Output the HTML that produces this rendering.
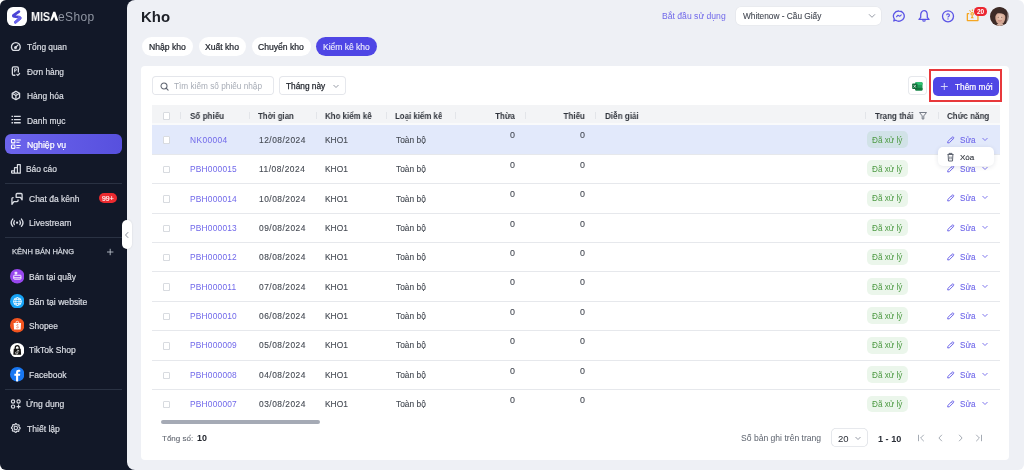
<!DOCTYPE html>
<html><head><meta charset="utf-8"><title>Kho</title>
<style>
*{box-sizing:border-box;margin:0;padding:0}
html,body{width:1024px;height:470px;overflow:hidden;background:#ffffff;font-family:"Liberation Sans",sans-serif}
.b{position:absolute}
.t{position:absolute;white-space:nowrap;will-change:transform;}
</style></head><body>
<div class="b" style="left:0px;top:0px;width:140px;height:470px;background:#121828;border-radius:6px 0 0 6px"></div>
<div class="b" style="left:7.3px;top:7px;width:19.4px;height:19.4px;background:#fff;border-radius:6px"></div>
<svg class="b" style="left:7px;top:7px" width="19" height="19" viewBox="0 0 19 19"><path d="M11.9 4.6 L6.8 8.1 Q5.6 9.1 7.2 9.5 L12.2 10.2 Q13.9 10.7 12.6 11.8 L8.4 15.2" stroke="#4b44d6" stroke-width="2.7" fill="none" stroke-linejoin="round" stroke-linecap="round"/><path d="M12.2 10.2 Q13.9 10.7 12.6 11.8 L8.4 15.2" stroke="#6a63ee" stroke-width="2.7" fill="none" stroke-linejoin="round" stroke-linecap="round"/></svg>
<div class="t" style="left:30.87px;top:11px;font-size:12.2px;line-height:12.2px;color:#ffffff;font-weight:bold;transform:scaleX(0.88);transform-origin:0 0;">MIS</div>
<svg class="b" style="left:0;top:0" width="60" height="24" viewBox="0 0 60 24"><path d="M50.1 20.7 L53.2 11.8 H55.3 L58.3 20.7 H55.6 L54.2 16.4 L52.0 20.7 Z" fill="#fff"/></svg>
<div class="t" style="left:58.08px;top:11px;font-size:12.0px;line-height:12.0px;color:#8f95a2;letter-spacing:0.35px;">eShop</div>
<svg class="b" style="left:8px;top:39.9px" width="16" height="14" viewBox="0 0 16 14"><path d="M5.18 10.45 A4.4 4.4 0 1 1 10.52 10.45 Z" stroke="#dadde4" stroke-width="1.3" fill="none" stroke-linejoin="round"/><circle cx="7.5" cy="7.6" r="1.5" fill="#dadde4"/><path d="M7.6 7.4 L9.9 5.1" stroke="#dadde4" stroke-width="1.3" stroke-linecap="round"/></svg>
<div class="t" style="left:26.70px;top:43px;font-size:8.35px;line-height:8.35px;color:#dadde4;-webkit-text-stroke:0.2px currentColor;">Tổng quan</div>
<svg class="b" style="left:8px;top:64.5px" width="16" height="14" viewBox="0 0 16 14"><path d="M10.35 7.4 V3.2 A1.25 1.25 0 0 0 9.1 1.95 H5.6 A1.25 1.25 0 0 0 4.35 3.2 V9 A1.25 1.25 0 0 0 5.6 10.25 H7.4" stroke="#dadde4" stroke-width="1.3" fill="none"/><path d="M8.9 9.5 L9.8 10.3 L11.6 8.5" stroke="#dadde4" stroke-width="1.2" fill="none" stroke-linecap="round" stroke-linejoin="round"/><path d="M6.7 7.4 V3.7 H7.5 A0.95 0.95 0 0 1 7.5 5.6 H6.7" stroke="#dadde4" stroke-width="1" fill="none"/></svg>
<div class="t" style="left:26.70px;top:68px;font-size:8.33px;line-height:8.33px;color:#dadde4;-webkit-text-stroke:0.2px currentColor;">Đơn hàng</div>
<svg class="b" style="left:8px;top:88.8px" width="16" height="14" viewBox="0 0 16 14"><path d="M7.9 2.2 L11.58 4.33 V8.58 L7.9 10.7 L4.22 8.58 V4.33 Z" stroke="#dadde4" stroke-width="1.3" fill="none" stroke-linejoin="round"/><path d="M4.5 4.6 L7.9 6.6 L11.3 4.6 M7.9 6.6 V10.4" stroke="#dadde4" stroke-width="1.2" fill="none"/><path d="M6.2 3.6 L9.6 5.5" stroke="#dadde4" stroke-width="0.8" fill="none"/></svg>
<div class="t" style="left:26.69px;top:92px;font-size:8.45px;line-height:8.45px;color:#dadde4;-webkit-text-stroke:0.2px currentColor;">Hàng hóa</div>
<svg class="b" style="left:8px;top:113.3px" width="16" height="14" viewBox="0 0 16 14"><path d="M3.5 3.4 H5.1 M6.0 3.4 H12.7 M3.5 6.6 H5.1 M6.0 6.6 H12.7 M3.5 9.8 H5.1 M6.0 9.8 H12.7" stroke="#dadde4" stroke-width="1.4" fill="none"/></svg>
<div class="t" style="left:26.69px;top:117px;font-size:8.46px;line-height:8.46px;color:#dadde4;-webkit-text-stroke:0.2px currentColor;">Danh mục</div>
<div class="b" style="left:4.8px;top:134.4px;width:117.3px;height:19.7px;background:linear-gradient(90deg,#6c64ec,#5750de);border-radius:6px"></div>
<svg class="b" style="left:8px;top:137.3px" width="16" height="14" viewBox="0 0 16 14"><rect x="3.5" y="2.5" width="3.4" height="3.4" rx="0.7" stroke="#fff" stroke-width="1.1" fill="none"/><rect x="3.5" y="8" width="3.4" height="3.4" rx="0.7" stroke="#fff" stroke-width="1.1" fill="none"/><path d="M8.3 3 H12.8 M8.3 5.3 H11.6 M8.3 8.5 H12.8 M8.3 10.8 H11.6" stroke="#fff" stroke-width="1.1" fill="none"/></svg>
<div class="t" style="left:26.78px;top:141px;font-size:8.7px;line-height:8.7px;color:#ffffff;-webkit-text-stroke:0.2px currentColor;">Nghiệp vụ</div>
<svg class="b" style="left:8px;top:162px" width="16" height="14" viewBox="0 0 16 14"><path d="M3.6 11.2 H12.3 V2.6 H9.4 V11.2 M9.4 5.7 H6.5 V11.2 M6.5 8.9 H3.6 V11.2" stroke="#dadde4" stroke-width="1.2" fill="none" stroke-linejoin="round"/></svg>
<div class="t" style="left:26.49px;top:165px;font-size:8.44px;line-height:8.44px;color:#dadde4;-webkit-text-stroke:0.2px currentColor;">Báo cáo</div>
<div class="b" style="left:5px;top:183px;width:117px;height:1px;background:#2a3243"></div>
<svg class="b" style="left:8px;top:191.7px" width="18" height="14" viewBox="0 0 18 14"><path d="M8.15 5.35 V2.5 A1 1 0 0 1 9.15 1.5 H13.1 A1 1 0 0 1 14.1 2.5 V7.8 L12.4 5.35 Z" stroke="#dadde4" stroke-width="1.3" fill="none" stroke-linejoin="round"/><path d="M5.6 5.54 H4.94 A1 1 0 0 0 3.94 6.54 V12.3 L5.9 9.56 H9.07 A1 1 0 0 0 10.07 8.56 V7.5" stroke="#dadde4" stroke-width="1.3" fill="none" stroke-linejoin="round"/></svg>
<div class="t" style="left:29.19px;top:195px;font-size:8.49px;line-height:8.49px;color:#dadde4;-webkit-text-stroke:0.2px currentColor;">Chat đa kênh</div>
<div class="b" style="left:99px;top:193.3px;width:18.4px;height:9.7px;background:#ec2a2f;border-radius:5px"></div>
<div class="t" style="left:102.19px;top:196px;font-size:6.9px;line-height:6.9px;color:#fff;-webkit-text-stroke:0.15px currentColor;">99+</div>
<svg class="b" style="left:8px;top:215.9px" width="18" height="14" viewBox="0 0 18 14"><circle cx="9.1" cy="6.7" r="1.1" fill="#dadde4"/><path d="M6.36 4.8 A3.35 3.35 0 0 0 6.36 8.6 M11.84 4.8 A3.35 3.35 0 0 1 11.84 8.6 M4.77 3.05 A5.65 5.65 0 0 0 4.77 10.35 M13.43 3.05 A5.65 5.65 0 0 1 13.43 10.35" stroke="#dadde4" stroke-width="1.3" fill="none" stroke-linecap="round"/></svg>
<div class="t" style="left:29.18px;top:219px;font-size:8.7px;line-height:8.7px;color:#dadde4;-webkit-text-stroke:0.2px currentColor;">Livestream</div>
<div class="b" style="left:5px;top:237px;width:117px;height:1px;background:#2a3243"></div>
<div class="t" style="left:11.85px;top:248px;font-size:7.5px;line-height:7.5px;color:#d0d4dc;-webkit-text-stroke:0.25px currentColor;">KÊNH BÁN HÀNG</div>
<svg class="b" style="left:105px;top:247px" width="10" height="10" viewBox="0 0 10 10"><path d="M5.2 1.8 V8.2 M2 5 H8.4" stroke="#b9bec8" stroke-width="0.9"/></svg>
<svg class="b" style="left:9.75px;top:269.35px" width="14.5" height="14.5" viewBox="-7.25 -7.25 14.5 14.5"><defs><clipPath id="c276"><circle r="7.25"/></clipPath></defs><circle r="7.25" fill="#9747ee"/><g clip-path="url(#c276)"><rect x="-2.7" y="-4.6" width="2.8" height="2.3" rx="0.4" fill="#f1e6ff"/><path d="M-1.3 -2.3 V-1.1" stroke="#fff" stroke-width="0.8"/><rect x="-3.5" y="-1.0" width="7.2" height="3.9" rx="0.5" stroke="#fff" stroke-width="0.9" fill="none"/><path d="M-3.5 1.4 H3.7" stroke="#fff" stroke-width="0.8"/></g></svg>
<div class="t" style="left:29.19px;top:273px;font-size:8.45px;line-height:8.45px;color:#dadde4;-webkit-text-stroke:0.2px currentColor;">Bán tại quầy</div>
<svg class="b" style="left:9.75px;top:293.95px" width="14.5" height="14.5" viewBox="-7.25 -7.25 14.5 14.5"><defs><clipPath id="c301"><circle r="7.25"/></clipPath></defs><circle r="7.25" fill="#17a3f5"/><g clip-path="url(#c301)"><circle cx="0.2" cy="0.3" r="3.9" stroke="#fff" stroke-width="0.9" fill="none"/><ellipse cx="0.2" cy="0.3" rx="1.7" ry="3.9" stroke="#fff" stroke-width="0.8" fill="none"/><path d="M-3.7 0.3 H4.1 M-3.2 -1.7 H3.6 M-3.2 2.3 H3.6" stroke="#fff" stroke-width="0.7"/></g></svg>
<div class="t" style="left:29.18px;top:298px;font-size:8.61px;line-height:8.61px;color:#dadde4;-webkit-text-stroke:0.2px currentColor;">Bán tại website</div>
<svg class="b" style="left:9.75px;top:318.15px" width="14.5" height="14.5" viewBox="-7.25 -7.25 14.5 14.5"><defs><clipPath id="c325"><circle r="7.25"/></clipPath></defs><circle r="7.25" fill="#f2541f"/><g clip-path="url(#c325)"><path d="M-3.6 -2.3 H3.8 L3.4 4.2 H-3.2 Z" fill="#fff"/><path d="M-1.3 -2.3 A1.4 1.7 0 0 1 1.5 -2.3" stroke="#fff" stroke-width="0.8" fill="none"/><path d="M1.2 -0.5 C0.3 -1 -0.9 -0.6 -0.4 0.4 C0 1.1 1.4 1.2 1.1 2.1 C0.8 2.9 -0.5 2.7 -1.1 2.2" stroke="#f2541f" stroke-width="0.6" fill="none"/></g></svg>
<div class="t" style="left:29.20px;top:322px;font-size:8.39px;line-height:8.39px;color:#dadde4;-webkit-text-stroke:0.2px currentColor;">Shopee</div>
<svg class="b" style="left:9.75px;top:342.75px" width="14.5" height="14.5" viewBox="-7.25 -7.25 14.5 14.5"><defs><clipPath id="c350"><circle r="7.25"/></clipPath></defs><circle r="7.25" fill="#ffffff"/><g clip-path="url(#c350)"><path d="M-3.5 -1.6 H3.5 L3.9 4.6 H-3.9 Z" fill="#111"/><path d="M-2 -1.2 V-2.4 A2 2.3 0 0 1 2 -2.4 V-1.2" stroke="#111" stroke-width="1.3" fill="none"/><path d="M0.6 -0.4 V2.6 A1.1 1.1 0 1 1 -0.6 1.5 M0.6 -0.4 Q1 0.6 2 0.7" stroke="#fff" stroke-width="0.75" fill="none"/></g></svg>
<div class="t" style="left:29.19px;top:346px;font-size:8.56px;line-height:8.56px;color:#dadde4;-webkit-text-stroke:0.2px currentColor;">TikTok Shop</div>
<svg class="b" style="left:9.75px;top:367.25px" width="14.5" height="14.5" viewBox="-7.25 -7.25 14.5 14.5"><defs><clipPath id="c374"><circle r="7.25"/></clipPath></defs><circle r="7.25" fill="#1877f2"/><g clip-path="url(#c374)"><path d="M-1.2 8 V1.6 H-2.9 V-0.4 H-1.2 V-1.9 C-1.2 -3.6 -0.2 -4.4 1.3 -4.4 C2 -4.4 2.6 -4.3 3 -4.2 V-2.5 H2 C1.2 -2.5 0.9 -2.1 0.9 -1.4 V-0.4 H3 L2.7 1.6 H0.9 V8 Z" fill="#fff"/></g></svg>
<div class="t" style="left:29.19px;top:371px;font-size:8.54px;line-height:8.54px;color:#dadde4;-webkit-text-stroke:0.2px currentColor;">Facebook</div>
<div class="b" style="left:5px;top:389px;width:117px;height:1px;background:#2a3243"></div>
<svg class="b" style="left:8px;top:396.7px" width="16" height="14" viewBox="0 0 16 14"><circle cx="5.05" cy="4.5" r="1.65" stroke="#dadde4" stroke-width="1.15" fill="none"/><circle cx="10.55" cy="4.5" r="1.65" stroke="#dadde4" stroke-width="1.15" fill="none"/><circle cx="5.05" cy="9.6" r="1.65" stroke="#dadde4" stroke-width="1.15" fill="none"/><path d="M10.55 7.6 V11.6 M8.55 9.6 H12.55" stroke="#dadde4" stroke-width="1.15"/></svg>
<div class="t" style="left:26.48px;top:400px;font-size:8.59px;line-height:8.59px;color:#dadde4;-webkit-text-stroke:0.2px currentColor;">Ứng dụng</div>
<svg class="b" style="left:8px;top:420.8px" width="16" height="14" viewBox="0 0 16 14"><path d="M7.59 2.66 L8.44 2.70 L8.96 3.75 L9.57 4.04 L10.72 3.78 L11.29 4.41 L10.92 5.52 L11.15 6.16 L12.14 6.79 L12.10 7.64 L11.05 8.16 L10.76 8.77 L11.02 9.92 L10.39 10.49 L9.28 10.12 L8.64 10.35 L8.01 11.34 L7.16 11.30 L6.64 10.25 L6.03 9.96 L4.88 10.22 L4.31 9.59 L4.68 8.48 L4.45 7.84 L3.46 7.21 L3.50 6.36 L4.55 5.84 L4.84 5.23 L4.58 4.08 L5.21 3.51 L6.32 3.88 L6.96 3.65 Z" stroke="#dadde4" stroke-width="1.1" fill="none" stroke-linejoin="round"/><circle cx="7.8" cy="7.0" r="1.7" stroke="#dadde4" stroke-width="1.1" fill="none"/></svg>
<div class="t" style="left:26.99px;top:425px;font-size:8.57px;line-height:8.57px;color:#dadde4;-webkit-text-stroke:0.2px currentColor;">Thiết lập</div>
<div class="b" style="left:127px;top:0px;width:897px;height:470px;background:#eef0f5;border-radius:8px 6px 6px 8px"></div>
<div class="b" style="left:122.2px;top:220.1px;width:10.1px;height:28.7px;background:#fff;border-radius:5px;box-shadow:0 0 2px rgba(0,0,0,0.12)"></div>
<svg class="b" style="left:122.2px;top:229px" width="10" height="12" viewBox="0 0 10 12"><path d="M6.2 3.2 L3.5 6 L6.2 8.8" stroke="#7d838f" stroke-width="0.9" fill="none"/></svg>
<div class="t" style="left:141.20px;top:10px;font-size:14.95px;line-height:14.95px;color:#1d2027;font-weight:bold;">Kho</div>
<div class="t" style="left:662.38px;top:12px;font-size:8.62px;line-height:8.62px;color:#7068ea;">Bắt đầu sử dụng</div>
<div class="b" style="left:736px;top:7px;width:144.8px;height:17.6px;background:#fff;border-radius:5px;box-shadow:0 0 0 0.6px #e3e5ea"></div>
<div class="t" style="left:742.50px;top:12px;font-size:8.31px;line-height:8.31px;color:#434852;-webkit-text-stroke:0.1px currentColor;">Whitenow - Cầu Giấy</div>
<svg class="b" style="left:866px;top:13px" width="12" height="6" viewBox="0 0 12 6"><path d="M3 1.3 L6 4.3 L9 1.3" stroke="#8a909c" stroke-width="0.9" fill="none"/></svg>
<svg class="b" style="left:892px;top:10px" width="14" height="12" viewBox="0 0 14 12"><path d="M7 1 A5.3 5.1 0 1 1 3.8 10.2 L1.8 11 L2.3 8.9 A5.3 5.1 0 0 1 7 1 Z" stroke="#5b54e6" stroke-width="1.3" fill="none" stroke-linejoin="round"/><path d="M4.3 7 L6 5.2 L7.7 6.3 L9.6 4.7" stroke="#5b54e6" stroke-width="1.1" fill="none" stroke-linejoin="round"/></svg>
<svg class="b" style="left:917px;top:9px" width="14" height="14" viewBox="0 0 14 14"><path d="M7 1.6 C9.2 1.6 10.3 3.9 10.3 6.2 V8.4 L12 10.4 H2 L3.7 8.4 V6.2 C3.7 3.9 4.8 1.6 7 1.6 Z" stroke="#5b54e6" stroke-width="1.3" fill="none" stroke-linejoin="round"/><path d="M5.6 11.2 A1.5 1.5 0 0 0 8.4 11.2" stroke="#5b54e6" stroke-width="1.3" fill="none"/></svg>
<svg class="b" style="left:941px;top:10px" width="14" height="13" viewBox="0 0 14 13"><circle cx="7" cy="6.3" r="5.5" stroke="#5b54e6" stroke-width="1.3" fill="none"/><path d="M5.7 5.2 A1.35 1.35 0 1 1 7.5 6.5 C7.1 6.7 7 7 7 7.5" stroke="#5b54e6" stroke-width="1.15" fill="none"/><circle cx="7" cy="8.9" r="0.7" fill="#5b54e6"/></svg>
<svg class="b" style="left:965px;top:8px" width="15" height="15" viewBox="0 0 15 15"><path d="M4.2 5.6 H2.35 V12.6 H12.95 V5.6 H11.2" stroke="#f5a623" stroke-width="1.3" fill="none" stroke-linejoin="round"/><circle cx="7.2" cy="5.9" r="1.25" stroke="#f5a623" stroke-width="1.1" fill="none"/><path d="M5.6 10.2 H8.8 L7.2 7.4 Z" fill="#f5a623"/><path d="M4.6 2.2 L5.6 3.8 M7.4 1.4 V3.2" stroke="#f5a623" stroke-width="1"/></svg>
<div class="b" style="left:974.0px;top:7.0px;width:12.8px;height:8.6px;background:#eb2630;border-radius:4.3px"></div>
<div class="t" style="left:976.61px;top:9px;font-size:6.5px;line-height:6.5px;color:#fff;font-weight:bold;">20</div>
<svg class="b" style="left:989.8px;top:6.6px" width="19" height="19" viewBox="0 0 19 19"><defs><clipPath id="av"><circle cx="9.5" cy="9.5" r="9.4"/></clipPath><radialGradient id="fg" cx="0.5" cy="0.45" r="0.6"><stop offset="0" stop-color="#ecc9b6"/><stop offset="1" stop-color="#c99985"/></radialGradient></defs><g clip-path="url(#av)"><rect width="19" height="19" fill="#8c7f7e"/><path d="M0 19 V8 C0 2 4 0 9.5 0 C14 0 17 2 17.5 7 L16 19 Z" fill="#3d2b27"/><ellipse cx="10.3" cy="11" rx="5" ry="6.3" fill="url(#fg)"/><path d="M4.8 9 C5 4.5 7.5 3 10.5 3 C13.5 3.1 15.8 5 15.6 8.6 C14 6.6 11 5.6 7 6.5 Z" fill="#3d2b27"/><path d="M6 19 C7 16.5 8.5 16.3 10 16.4 C11.7 16.3 13.5 16.8 14.5 19 Z" fill="#d7b3a3"/><path d="M8.3 13.6 Q10 14.6 11.7 13.6" stroke="#b5605a" stroke-width="0.7" fill="none"/><circle cx="8.2" cy="10.2" r="0.45" fill="#3a2824"/><circle cx="11.8" cy="10.2" r="0.45" fill="#3a2824"/></g></svg>
<div class="b" style="left:142.1px;top:37.0px;width:50.8px;height:19.2px;background:#fff;border-radius:10px"></div>
<div class="t" style="left:148.98px;top:43px;font-size:8.61px;line-height:8.61px;color:#23272f;-webkit-text-stroke:0.22px currentColor;">Nhập kho</div>
<div class="b" style="left:198.5px;top:37.0px;width:47.5px;height:19.2px;background:#fff;border-radius:10px"></div>
<div class="t" style="left:205.08px;top:43px;font-size:8.61px;line-height:8.61px;color:#23272f;-webkit-text-stroke:0.22px currentColor;">Xuất kho</div>
<div class="b" style="left:251.8px;top:37.0px;width:58.9px;height:19.2px;background:#fff;border-radius:10px"></div>
<div class="t" style="left:258.18px;top:43px;font-size:8.61px;line-height:8.61px;color:#23272f;-webkit-text-stroke:0.22px currentColor;">Chuyển kho</div>
<div class="b" style="left:316.2px;top:37.0px;width:60.8px;height:19.2px;background:#4f46e5;border-radius:10px"></div>
<div class="t" style="left:323.39px;top:43px;font-size:8.5px;line-height:8.5px;color:#f0f0fd;-webkit-text-stroke:0.12px currentColor;">Kiểm kê kho</div>
<div class="b" style="left:141.3px;top:66.3px;width:867.9px;height:393.5px;background:#fff;border-radius:4px"></div>
<div class="b" style="left:152.1px;top:76.0px;width:121.8px;height:19.1px;background:#fff;border-radius:4px;box-shadow:inset 0 0 0 0.9px #e4e6eb"></div>
<svg class="b" style="left:158.5px;top:80.5px" width="11" height="11" viewBox="0 0 11 11"><circle cx="5" cy="5" r="3.0" stroke="#5f6571" stroke-width="1.05" fill="none"/><path d="M7.2 7.2 L9.1 9.1" stroke="#5f6571" stroke-width="1.1" stroke-linecap="round"/></svg>
<div class="t" style="left:173.91px;top:83px;font-size:8.25px;line-height:8.25px;color:#a7acb6;">Tìm kiếm số phiếu nhập</div>
<div class="b" style="left:279.2px;top:76.0px;width:66.6px;height:19.1px;background:#fff;border-radius:4px;box-shadow:inset 0 0 0 0.9px #e4e6eb"></div>
<div class="t" style="left:286.40px;top:82px;font-size:8.31px;line-height:8.31px;color:#23272f;-webkit-text-stroke:0.25px currentColor;">Tháng này</div>
<svg class="b" style="left:332px;top:83.5px" width="8" height="5" viewBox="0 0 8 5"><path d="M1.5 1 L4 3.5 L6.5 1" stroke="#8a909c" stroke-width="0.9" fill="none"/></svg>
<div class="b" style="left:907.7px;top:76.1px;width:19.3px;height:19.4px;background:#fff;border-radius:4px;box-shadow:inset 0 0 0 0.9px #e6e8ec"></div>
<svg class="b" style="left:912.2px;top:81.8px" width="11" height="9" viewBox="0 0 11 9"><rect x="3.2" y="0.3" width="7.3" height="8.3" rx="1" fill="#1f9d57"/><rect x="3.2" y="0.3" width="7.3" height="2.8" rx="0.8" fill="#2fbf71"/><rect x="3.2" y="5.8" width="7.3" height="2.8" rx="0.8" fill="#137a3f"/><rect x="0.2" y="1.6" width="5.2" height="5.4" rx="0.7" fill="#0e6b37"/><path d="M1.6 2.9 L3.9 5.7 M3.9 2.9 L1.6 5.7" stroke="#e9f5ee" stroke-width="0.7"/></svg>
<div class="b" style="left:929.2px;top:68.9px;width:72.9px;height:32.9px;border:2.1px solid #e8383b;box-sizing:border-box"></div>
<div class="b" style="left:932.5px;top:77px;width:66.5px;height:18.6px;background:#4f46e5;border-radius:5px"></div>
<svg class="b" style="left:939px;top:81.1px" width="11" height="11" viewBox="0 0 11 11"><path d="M5.3 2 V9 M1.8 5.5 H8.8" stroke="#e6e5fb" stroke-width="0.85"/></svg>
<div class="t" style="left:954.80px;top:83px;font-size:8.3px;line-height:8.3px;color:#fff;-webkit-text-stroke:0.2px currentColor;">Thêm mới</div>
<div class="b" style="left:152px;top:105.4px;width:848px;height:17.2px;background:#f3f4f6"></div>
<div class="b" style="left:152px;top:122.6px;width:848px;height:2.3px;background:#f9fafb"></div>
<div class="b" style="left:162.5px;top:112.3px;width:7.6px;height:7.5px;background:#fff;border-radius:1.5px;box-shadow:inset 0 0 0 0.8px #cdd1d7"></div>
<div class="b" style="left:180.1px;top:112.0px;width:0.8px;height:7.4px;background:#e3e5e9"></div>
<div class="b" style="left:248.6px;top:112.0px;width:0.8px;height:7.4px;background:#e3e5e9"></div>
<div class="b" style="left:315.6px;top:112.0px;width:0.8px;height:7.4px;background:#e3e5e9"></div>
<div class="b" style="left:385.7px;top:112.0px;width:0.8px;height:7.4px;background:#e3e5e9"></div>
<div class="b" style="left:454.8px;top:112.0px;width:0.8px;height:7.4px;background:#e3e5e9"></div>
<div class="b" style="left:524.5px;top:112.0px;width:0.8px;height:7.4px;background:#e3e5e9"></div>
<div class="b" style="left:594.7px;top:112.0px;width:0.8px;height:7.4px;background:#e3e5e9"></div>
<div class="b" style="left:864.9px;top:112.0px;width:0.8px;height:7.4px;background:#e3e5e9"></div>
<div class="b" style="left:937.6px;top:112.0px;width:0.8px;height:7.4px;background:#e3e5e9"></div>
<div class="t" style="left:190.17px;top:112px;font-size:8.8px;line-height:8.8px;color:#2f333b;font-weight:bold;transform:scaleX(0.919);transform-origin:left top;">Số phiếu</div>
<div class="t" style="left:258.37px;top:112px;font-size:8.8px;line-height:8.8px;color:#2f333b;font-weight:bold;transform:scaleX(0.898);transform-origin:left top;">Thời gian</div>
<div class="t" style="left:324.97px;top:112px;font-size:8.8px;line-height:8.8px;color:#2f333b;font-weight:bold;transform:scaleX(0.900);transform-origin:left top;">Kho kiểm kê</div>
<div class="t" style="left:395.27px;top:112px;font-size:8.8px;line-height:8.8px;color:#2f333b;font-weight:bold;transform:scaleX(0.895);transform-origin:left top;">Loại kiểm kê</div>
<div class="t" style="left:455.13px;width:60px;text-align:right;top:112px;font-size:8.8px;line-height:8.8px;color:#2f333b;font-weight:bold;transform:scaleX(0.898);transform-origin:right top;">Thừa</div>
<div class="t" style="left:524.93px;width:60px;text-align:right;top:112px;font-size:8.8px;line-height:8.8px;color:#2f333b;font-weight:bold;transform:scaleX(0.920);transform-origin:right top;">Thiếu</div>
<div class="t" style="left:604.67px;top:112px;font-size:8.8px;line-height:8.8px;color:#2f333b;font-weight:bold;transform:scaleX(0.919);transform-origin:left top;">Diễn giải</div>
<div class="t" style="left:874.67px;top:112px;font-size:8.8px;line-height:8.8px;color:#2f333b;font-weight:bold;transform:scaleX(0.914);transform-origin:left top;">Trạng thái</div>
<svg class="b" style="left:918px;top:111px" width="10" height="10" viewBox="0 0 10 10"><path d="M1.5 1.5 H8.5 L5.8 4.9 V8.0 H4.2 V4.9 Z" stroke="#6f7581" stroke-width="0.95" fill="none" stroke-linejoin="round"/></svg>
<div class="t" style="left:947.37px;top:112px;font-size:8.8px;line-height:8.8px;color:#2f333b;font-weight:bold;transform:scaleX(0.910);transform-origin:left top;">Chức năng</div>
<div class="b" style="left:152px;top:124.9px;width:848px;height:29.39px;background:#e2e9fb"></div>
<div class="b" style="left:152px;top:153.79px;width:848px;height:0.8px;background:#e6e8ec"></div>
<div class="b" style="left:162.5px;top:136.4px;width:7.6px;height:7.5px;background:#fff;border-radius:1.5px;box-shadow:inset 0 0 0 0.8px #cdd1d7"></div>
<div class="t" style="left:190.20px;top:136px;font-size:8.4px;line-height:8.4px;color:#7068ea;letter-spacing:0.38px;">NK00004</div>
<div class="t" style="left:258.80px;top:136px;font-size:8.4px;line-height:8.4px;color:#454a53;letter-spacing:0.5px;-webkit-text-stroke:0.12px currentColor;">12/08/2024</div>
<div class="t" style="left:325.20px;top:136px;font-size:8.4px;line-height:8.4px;color:#454a53;-webkit-text-stroke:0.12px currentColor;">KHO1</div>
<div class="t" style="left:395.70px;top:136px;font-size:8.4px;line-height:8.4px;color:#454a53;-webkit-text-stroke:0.12px currentColor;">Toàn bộ</div>
<div class="t" style="left:485.23px;width:30px;text-align:right;top:131px;font-size:8.9px;line-height:8.9px;color:#454a53;-webkit-text-stroke:0.1px currentColor;">0</div>
<div class="t" style="left:555.03px;width:30px;text-align:right;top:131px;font-size:8.9px;line-height:8.9px;color:#454a53;-webkit-text-stroke:0.1px currentColor;">0</div>
<div class="b" style="left:867.4px;top:131.0px;width:40.3px;height:16.9px;background:rgba(76,175,80,0.115);border-radius:5px"></div>
<div class="t" style="left:871.91px;top:137px;font-size:8.16px;line-height:8.16px;color:#4d9a43;">Đã xử lý</div>
<svg class="b" style="left:945px;top:134.7px" width="11" height="10" viewBox="0 0 11 10"><path d="M2.7 8.0 L3.0 6.3 L7.1 2.2 A0.95 0.95 0 0 1 8.5 3.6 L4.4 7.7 Z" stroke="#7068ea" stroke-width="1" fill="none" stroke-linejoin="round"/><path d="M6.3 3.0 L7.7 4.4" stroke="#7068ea" stroke-width="0.9"/></svg>
<div class="t" style="left:960.21px;top:137px;font-size:8.2px;line-height:8.2px;color:#7068ea;-webkit-text-stroke:0.12px currentColor;">Sửa</div>
<svg class="b" style="left:981px;top:136.7px" width="8" height="5" viewBox="0 0 8 5"><path d="M1.5 1 L4 3.5 L6.5 1" stroke="#7068ea" stroke-width="0.9" fill="none"/></svg>
<div class="b" style="left:152px;top:183.18px;width:848px;height:0.8px;background:#e6e8ec"></div>
<div class="b" style="left:162.5px;top:165.79px;width:7.6px;height:7.5px;background:#fff;border-radius:1.5px;box-shadow:inset 0 0 0 0.8px #cdd1d7"></div>
<div class="t" style="left:190.20px;top:165px;font-size:8.4px;line-height:8.4px;color:#7068ea;letter-spacing:0.2px;">PBH000015</div>
<div class="t" style="left:258.80px;top:165px;font-size:8.4px;line-height:8.4px;color:#454a53;letter-spacing:0.5px;-webkit-text-stroke:0.12px currentColor;">11/08/2024</div>
<div class="t" style="left:325.20px;top:165px;font-size:8.4px;line-height:8.4px;color:#454a53;-webkit-text-stroke:0.12px currentColor;">KHO1</div>
<div class="t" style="left:395.70px;top:165px;font-size:8.4px;line-height:8.4px;color:#454a53;-webkit-text-stroke:0.12px currentColor;">Toàn bộ</div>
<div class="t" style="left:485.23px;width:30px;text-align:right;top:161px;font-size:8.9px;line-height:8.9px;color:#454a53;-webkit-text-stroke:0.1px currentColor;">0</div>
<div class="t" style="left:555.03px;width:30px;text-align:right;top:161px;font-size:8.9px;line-height:8.9px;color:#454a53;-webkit-text-stroke:0.1px currentColor;">0</div>
<div class="b" style="left:867.4px;top:160.39px;width:40.3px;height:16.9px;background:rgba(76,175,80,0.115);border-radius:5px"></div>
<div class="t" style="left:871.91px;top:166px;font-size:8.16px;line-height:8.16px;color:#4d9a43;">Đã xử lý</div>
<svg class="b" style="left:945px;top:164.09px" width="11" height="10" viewBox="0 0 11 10"><path d="M2.7 8.0 L3.0 6.3 L7.1 2.2 A0.95 0.95 0 0 1 8.5 3.6 L4.4 7.7 Z" stroke="#7068ea" stroke-width="1" fill="none" stroke-linejoin="round"/><path d="M6.3 3.0 L7.7 4.4" stroke="#7068ea" stroke-width="0.9"/></svg>
<div class="t" style="left:960.21px;top:166px;font-size:8.2px;line-height:8.2px;color:#7068ea;-webkit-text-stroke:0.12px currentColor;">Sửa</div>
<svg class="b" style="left:981px;top:166.09px" width="8" height="5" viewBox="0 0 8 5"><path d="M1.5 1 L4 3.5 L6.5 1" stroke="#7068ea" stroke-width="0.9" fill="none"/></svg>
<div class="b" style="left:152px;top:212.57px;width:848px;height:0.8px;background:#e6e8ec"></div>
<div class="b" style="left:162.5px;top:195.18px;width:7.6px;height:7.5px;background:#fff;border-radius:1.5px;box-shadow:inset 0 0 0 0.8px #cdd1d7"></div>
<div class="t" style="left:190.20px;top:195px;font-size:8.4px;line-height:8.4px;color:#7068ea;letter-spacing:0.2px;">PBH000014</div>
<div class="t" style="left:258.80px;top:195px;font-size:8.4px;line-height:8.4px;color:#454a53;letter-spacing:0.5px;-webkit-text-stroke:0.12px currentColor;">10/08/2024</div>
<div class="t" style="left:325.20px;top:195px;font-size:8.4px;line-height:8.4px;color:#454a53;-webkit-text-stroke:0.12px currentColor;">KHO1</div>
<div class="t" style="left:395.70px;top:195px;font-size:8.4px;line-height:8.4px;color:#454a53;-webkit-text-stroke:0.12px currentColor;">Toàn bộ</div>
<div class="t" style="left:485.23px;width:30px;text-align:right;top:190px;font-size:8.9px;line-height:8.9px;color:#454a53;-webkit-text-stroke:0.1px currentColor;">0</div>
<div class="t" style="left:555.03px;width:30px;text-align:right;top:190px;font-size:8.9px;line-height:8.9px;color:#454a53;-webkit-text-stroke:0.1px currentColor;">0</div>
<div class="b" style="left:867.4px;top:189.78px;width:40.3px;height:16.9px;background:rgba(76,175,80,0.115);border-radius:5px"></div>
<div class="t" style="left:871.91px;top:195px;font-size:8.16px;line-height:8.16px;color:#4d9a43;">Đã xử lý</div>
<svg class="b" style="left:945px;top:193.48px" width="11" height="10" viewBox="0 0 11 10"><path d="M2.7 8.0 L3.0 6.3 L7.1 2.2 A0.95 0.95 0 0 1 8.5 3.6 L4.4 7.7 Z" stroke="#7068ea" stroke-width="1" fill="none" stroke-linejoin="round"/><path d="M6.3 3.0 L7.7 4.4" stroke="#7068ea" stroke-width="0.9"/></svg>
<div class="t" style="left:960.21px;top:195px;font-size:8.2px;line-height:8.2px;color:#7068ea;-webkit-text-stroke:0.12px currentColor;">Sửa</div>
<svg class="b" style="left:981px;top:195.48px" width="8" height="5" viewBox="0 0 8 5"><path d="M1.5 1 L4 3.5 L6.5 1" stroke="#7068ea" stroke-width="0.9" fill="none"/></svg>
<div class="b" style="left:152px;top:241.96px;width:848px;height:0.8px;background:#e6e8ec"></div>
<div class="b" style="left:162.5px;top:224.57px;width:7.6px;height:7.5px;background:#fff;border-radius:1.5px;box-shadow:inset 0 0 0 0.8px #cdd1d7"></div>
<div class="t" style="left:190.20px;top:224px;font-size:8.4px;line-height:8.4px;color:#7068ea;letter-spacing:0.2px;">PBH000013</div>
<div class="t" style="left:258.80px;top:224px;font-size:8.4px;line-height:8.4px;color:#454a53;letter-spacing:0.5px;-webkit-text-stroke:0.12px currentColor;">09/08/2024</div>
<div class="t" style="left:325.20px;top:224px;font-size:8.4px;line-height:8.4px;color:#454a53;-webkit-text-stroke:0.12px currentColor;">KHO1</div>
<div class="t" style="left:395.70px;top:224px;font-size:8.4px;line-height:8.4px;color:#454a53;-webkit-text-stroke:0.12px currentColor;">Toàn bộ</div>
<div class="t" style="left:485.23px;width:30px;text-align:right;top:220px;font-size:8.9px;line-height:8.9px;color:#454a53;-webkit-text-stroke:0.1px currentColor;">0</div>
<div class="t" style="left:555.03px;width:30px;text-align:right;top:220px;font-size:8.9px;line-height:8.9px;color:#454a53;-webkit-text-stroke:0.1px currentColor;">0</div>
<div class="b" style="left:867.4px;top:219.17px;width:40.3px;height:16.9px;background:rgba(76,175,80,0.115);border-radius:5px"></div>
<div class="t" style="left:871.91px;top:225px;font-size:8.16px;line-height:8.16px;color:#4d9a43;">Đã xử lý</div>
<svg class="b" style="left:945px;top:222.87px" width="11" height="10" viewBox="0 0 11 10"><path d="M2.7 8.0 L3.0 6.3 L7.1 2.2 A0.95 0.95 0 0 1 8.5 3.6 L4.4 7.7 Z" stroke="#7068ea" stroke-width="1" fill="none" stroke-linejoin="round"/><path d="M6.3 3.0 L7.7 4.4" stroke="#7068ea" stroke-width="0.9"/></svg>
<div class="t" style="left:960.21px;top:225px;font-size:8.2px;line-height:8.2px;color:#7068ea;-webkit-text-stroke:0.12px currentColor;">Sửa</div>
<svg class="b" style="left:981px;top:224.87px" width="8" height="5" viewBox="0 0 8 5"><path d="M1.5 1 L4 3.5 L6.5 1" stroke="#7068ea" stroke-width="0.9" fill="none"/></svg>
<div class="b" style="left:152px;top:271.35px;width:848px;height:0.8px;background:#e6e8ec"></div>
<div class="b" style="left:162.5px;top:253.96px;width:7.6px;height:7.5px;background:#fff;border-radius:1.5px;box-shadow:inset 0 0 0 0.8px #cdd1d7"></div>
<div class="t" style="left:190.20px;top:253px;font-size:8.4px;line-height:8.4px;color:#7068ea;letter-spacing:0.2px;">PBH000012</div>
<div class="t" style="left:258.80px;top:253px;font-size:8.4px;line-height:8.4px;color:#454a53;letter-spacing:0.5px;-webkit-text-stroke:0.12px currentColor;">08/08/2024</div>
<div class="t" style="left:325.20px;top:253px;font-size:8.4px;line-height:8.4px;color:#454a53;-webkit-text-stroke:0.12px currentColor;">KHO1</div>
<div class="t" style="left:395.70px;top:253px;font-size:8.4px;line-height:8.4px;color:#454a53;-webkit-text-stroke:0.12px currentColor;">Toàn bộ</div>
<div class="t" style="left:485.23px;width:30px;text-align:right;top:249px;font-size:8.9px;line-height:8.9px;color:#454a53;-webkit-text-stroke:0.1px currentColor;">0</div>
<div class="t" style="left:555.03px;width:30px;text-align:right;top:249px;font-size:8.9px;line-height:8.9px;color:#454a53;-webkit-text-stroke:0.1px currentColor;">0</div>
<div class="b" style="left:867.4px;top:248.56px;width:40.3px;height:16.9px;background:rgba(76,175,80,0.115);border-radius:5px"></div>
<div class="t" style="left:871.91px;top:254px;font-size:8.16px;line-height:8.16px;color:#4d9a43;">Đã xử lý</div>
<svg class="b" style="left:945px;top:252.26px" width="11" height="10" viewBox="0 0 11 10"><path d="M2.7 8.0 L3.0 6.3 L7.1 2.2 A0.95 0.95 0 0 1 8.5 3.6 L4.4 7.7 Z" stroke="#7068ea" stroke-width="1" fill="none" stroke-linejoin="round"/><path d="M6.3 3.0 L7.7 4.4" stroke="#7068ea" stroke-width="0.9"/></svg>
<div class="t" style="left:960.21px;top:254px;font-size:8.2px;line-height:8.2px;color:#7068ea;-webkit-text-stroke:0.12px currentColor;">Sửa</div>
<svg class="b" style="left:981px;top:254.26px" width="8" height="5" viewBox="0 0 8 5"><path d="M1.5 1 L4 3.5 L6.5 1" stroke="#7068ea" stroke-width="0.9" fill="none"/></svg>
<div class="b" style="left:152px;top:300.74px;width:848px;height:0.8px;background:#e6e8ec"></div>
<div class="b" style="left:162.5px;top:283.35px;width:7.6px;height:7.5px;background:#fff;border-radius:1.5px;box-shadow:inset 0 0 0 0.8px #cdd1d7"></div>
<div class="t" style="left:190.20px;top:283px;font-size:8.4px;line-height:8.4px;color:#7068ea;letter-spacing:0.2px;">PBH000011</div>
<div class="t" style="left:258.80px;top:283px;font-size:8.4px;line-height:8.4px;color:#454a53;letter-spacing:0.5px;-webkit-text-stroke:0.12px currentColor;">07/08/2024</div>
<div class="t" style="left:325.20px;top:283px;font-size:8.4px;line-height:8.4px;color:#454a53;-webkit-text-stroke:0.12px currentColor;">KHO1</div>
<div class="t" style="left:395.70px;top:283px;font-size:8.4px;line-height:8.4px;color:#454a53;-webkit-text-stroke:0.12px currentColor;">Toàn bộ</div>
<div class="t" style="left:485.23px;width:30px;text-align:right;top:278px;font-size:8.9px;line-height:8.9px;color:#454a53;-webkit-text-stroke:0.1px currentColor;">0</div>
<div class="t" style="left:555.03px;width:30px;text-align:right;top:278px;font-size:8.9px;line-height:8.9px;color:#454a53;-webkit-text-stroke:0.1px currentColor;">0</div>
<div class="b" style="left:867.4px;top:277.95px;width:40.3px;height:16.9px;background:rgba(76,175,80,0.115);border-radius:5px"></div>
<div class="t" style="left:871.91px;top:284px;font-size:8.16px;line-height:8.16px;color:#4d9a43;">Đã xử lý</div>
<svg class="b" style="left:945px;top:281.65px" width="11" height="10" viewBox="0 0 11 10"><path d="M2.7 8.0 L3.0 6.3 L7.1 2.2 A0.95 0.95 0 0 1 8.5 3.6 L4.4 7.7 Z" stroke="#7068ea" stroke-width="1" fill="none" stroke-linejoin="round"/><path d="M6.3 3.0 L7.7 4.4" stroke="#7068ea" stroke-width="0.9"/></svg>
<div class="t" style="left:960.21px;top:284px;font-size:8.2px;line-height:8.2px;color:#7068ea;-webkit-text-stroke:0.12px currentColor;">Sửa</div>
<svg class="b" style="left:981px;top:283.65px" width="8" height="5" viewBox="0 0 8 5"><path d="M1.5 1 L4 3.5 L6.5 1" stroke="#7068ea" stroke-width="0.9" fill="none"/></svg>
<div class="b" style="left:152px;top:330.13px;width:848px;height:0.8px;background:#e6e8ec"></div>
<div class="b" style="left:162.5px;top:312.74px;width:7.6px;height:7.5px;background:#fff;border-radius:1.5px;box-shadow:inset 0 0 0 0.8px #cdd1d7"></div>
<div class="t" style="left:190.20px;top:312px;font-size:8.4px;line-height:8.4px;color:#7068ea;letter-spacing:0.2px;">PBH000010</div>
<div class="t" style="left:258.80px;top:312px;font-size:8.4px;line-height:8.4px;color:#454a53;letter-spacing:0.5px;-webkit-text-stroke:0.12px currentColor;">06/08/2024</div>
<div class="t" style="left:325.20px;top:312px;font-size:8.4px;line-height:8.4px;color:#454a53;-webkit-text-stroke:0.12px currentColor;">KHO1</div>
<div class="t" style="left:395.70px;top:312px;font-size:8.4px;line-height:8.4px;color:#454a53;-webkit-text-stroke:0.12px currentColor;">Toàn bộ</div>
<div class="t" style="left:485.23px;width:30px;text-align:right;top:308px;font-size:8.9px;line-height:8.9px;color:#454a53;-webkit-text-stroke:0.1px currentColor;">0</div>
<div class="t" style="left:555.03px;width:30px;text-align:right;top:308px;font-size:8.9px;line-height:8.9px;color:#454a53;-webkit-text-stroke:0.1px currentColor;">0</div>
<div class="b" style="left:867.4px;top:307.34px;width:40.3px;height:16.9px;background:rgba(76,175,80,0.115);border-radius:5px"></div>
<div class="t" style="left:871.91px;top:313px;font-size:8.16px;line-height:8.16px;color:#4d9a43;">Đã xử lý</div>
<svg class="b" style="left:945px;top:311.04px" width="11" height="10" viewBox="0 0 11 10"><path d="M2.7 8.0 L3.0 6.3 L7.1 2.2 A0.95 0.95 0 0 1 8.5 3.6 L4.4 7.7 Z" stroke="#7068ea" stroke-width="1" fill="none" stroke-linejoin="round"/><path d="M6.3 3.0 L7.7 4.4" stroke="#7068ea" stroke-width="0.9"/></svg>
<div class="t" style="left:960.21px;top:313px;font-size:8.2px;line-height:8.2px;color:#7068ea;-webkit-text-stroke:0.12px currentColor;">Sửa</div>
<svg class="b" style="left:981px;top:313.04px" width="8" height="5" viewBox="0 0 8 5"><path d="M1.5 1 L4 3.5 L6.5 1" stroke="#7068ea" stroke-width="0.9" fill="none"/></svg>
<div class="b" style="left:152px;top:359.52px;width:848px;height:0.8px;background:#e6e8ec"></div>
<div class="b" style="left:162.5px;top:342.13px;width:7.6px;height:7.5px;background:#fff;border-radius:1.5px;box-shadow:inset 0 0 0 0.8px #cdd1d7"></div>
<div class="t" style="left:190.20px;top:341px;font-size:8.4px;line-height:8.4px;color:#7068ea;letter-spacing:0.2px;">PBH000009</div>
<div class="t" style="left:258.80px;top:341px;font-size:8.4px;line-height:8.4px;color:#454a53;letter-spacing:0.5px;-webkit-text-stroke:0.12px currentColor;">05/08/2024</div>
<div class="t" style="left:325.20px;top:341px;font-size:8.4px;line-height:8.4px;color:#454a53;-webkit-text-stroke:0.12px currentColor;">KHO1</div>
<div class="t" style="left:395.70px;top:341px;font-size:8.4px;line-height:8.4px;color:#454a53;-webkit-text-stroke:0.12px currentColor;">Toàn bộ</div>
<div class="t" style="left:485.23px;width:30px;text-align:right;top:337px;font-size:8.9px;line-height:8.9px;color:#454a53;-webkit-text-stroke:0.1px currentColor;">0</div>
<div class="t" style="left:555.03px;width:30px;text-align:right;top:337px;font-size:8.9px;line-height:8.9px;color:#454a53;-webkit-text-stroke:0.1px currentColor;">0</div>
<div class="b" style="left:867.4px;top:336.73px;width:40.3px;height:16.9px;background:rgba(76,175,80,0.115);border-radius:5px"></div>
<div class="t" style="left:871.91px;top:342px;font-size:8.16px;line-height:8.16px;color:#4d9a43;">Đã xử lý</div>
<svg class="b" style="left:945px;top:340.43px" width="11" height="10" viewBox="0 0 11 10"><path d="M2.7 8.0 L3.0 6.3 L7.1 2.2 A0.95 0.95 0 0 1 8.5 3.6 L4.4 7.7 Z" stroke="#7068ea" stroke-width="1" fill="none" stroke-linejoin="round"/><path d="M6.3 3.0 L7.7 4.4" stroke="#7068ea" stroke-width="0.9"/></svg>
<div class="t" style="left:960.21px;top:342px;font-size:8.2px;line-height:8.2px;color:#7068ea;-webkit-text-stroke:0.12px currentColor;">Sửa</div>
<svg class="b" style="left:981px;top:342.43px" width="8" height="5" viewBox="0 0 8 5"><path d="M1.5 1 L4 3.5 L6.5 1" stroke="#7068ea" stroke-width="0.9" fill="none"/></svg>
<div class="b" style="left:152px;top:388.91px;width:848px;height:0.8px;background:#e6e8ec"></div>
<div class="b" style="left:162.5px;top:371.52px;width:7.6px;height:7.5px;background:#fff;border-radius:1.5px;box-shadow:inset 0 0 0 0.8px #cdd1d7"></div>
<div class="t" style="left:190.20px;top:371px;font-size:8.4px;line-height:8.4px;color:#7068ea;letter-spacing:0.2px;">PBH000008</div>
<div class="t" style="left:258.80px;top:371px;font-size:8.4px;line-height:8.4px;color:#454a53;letter-spacing:0.5px;-webkit-text-stroke:0.12px currentColor;">04/08/2024</div>
<div class="t" style="left:325.20px;top:371px;font-size:8.4px;line-height:8.4px;color:#454a53;-webkit-text-stroke:0.12px currentColor;">KHO1</div>
<div class="t" style="left:395.70px;top:371px;font-size:8.4px;line-height:8.4px;color:#454a53;-webkit-text-stroke:0.12px currentColor;">Toàn bộ</div>
<div class="t" style="left:485.23px;width:30px;text-align:right;top:367px;font-size:8.9px;line-height:8.9px;color:#454a53;-webkit-text-stroke:0.1px currentColor;">0</div>
<div class="t" style="left:555.03px;width:30px;text-align:right;top:367px;font-size:8.9px;line-height:8.9px;color:#454a53;-webkit-text-stroke:0.1px currentColor;">0</div>
<div class="b" style="left:867.4px;top:366.12px;width:40.3px;height:16.9px;background:rgba(76,175,80,0.115);border-radius:5px"></div>
<div class="t" style="left:871.91px;top:372px;font-size:8.16px;line-height:8.16px;color:#4d9a43;">Đã xử lý</div>
<svg class="b" style="left:945px;top:369.82px" width="11" height="10" viewBox="0 0 11 10"><path d="M2.7 8.0 L3.0 6.3 L7.1 2.2 A0.95 0.95 0 0 1 8.5 3.6 L4.4 7.7 Z" stroke="#7068ea" stroke-width="1" fill="none" stroke-linejoin="round"/><path d="M6.3 3.0 L7.7 4.4" stroke="#7068ea" stroke-width="0.9"/></svg>
<div class="t" style="left:960.21px;top:372px;font-size:8.2px;line-height:8.2px;color:#7068ea;-webkit-text-stroke:0.12px currentColor;">Sửa</div>
<svg class="b" style="left:981px;top:371.82px" width="8" height="5" viewBox="0 0 8 5"><path d="M1.5 1 L4 3.5 L6.5 1" stroke="#7068ea" stroke-width="0.9" fill="none"/></svg>
<div class="b" style="left:162.5px;top:400.91px;width:7.6px;height:7.5px;background:#fff;border-radius:1.5px;box-shadow:inset 0 0 0 0.8px #cdd1d7"></div>
<div class="t" style="left:190.20px;top:400px;font-size:8.4px;line-height:8.4px;color:#7068ea;letter-spacing:0.2px;">PBH000007</div>
<div class="t" style="left:258.80px;top:400px;font-size:8.4px;line-height:8.4px;color:#454a53;letter-spacing:0.5px;-webkit-text-stroke:0.12px currentColor;">03/08/2024</div>
<div class="t" style="left:325.20px;top:400px;font-size:8.4px;line-height:8.4px;color:#454a53;-webkit-text-stroke:0.12px currentColor;">KHO1</div>
<div class="t" style="left:395.70px;top:400px;font-size:8.4px;line-height:8.4px;color:#454a53;-webkit-text-stroke:0.12px currentColor;">Toàn bộ</div>
<div class="t" style="left:485.23px;width:30px;text-align:right;top:396px;font-size:8.9px;line-height:8.9px;color:#454a53;-webkit-text-stroke:0.1px currentColor;">0</div>
<div class="t" style="left:555.03px;width:30px;text-align:right;top:396px;font-size:8.9px;line-height:8.9px;color:#454a53;-webkit-text-stroke:0.1px currentColor;">0</div>
<div class="b" style="left:867.4px;top:395.51px;width:40.3px;height:16.9px;background:rgba(76,175,80,0.115);border-radius:5px"></div>
<div class="t" style="left:871.91px;top:401px;font-size:8.16px;line-height:8.16px;color:#4d9a43;">Đã xử lý</div>
<svg class="b" style="left:945px;top:399.21px" width="11" height="10" viewBox="0 0 11 10"><path d="M2.7 8.0 L3.0 6.3 L7.1 2.2 A0.95 0.95 0 0 1 8.5 3.6 L4.4 7.7 Z" stroke="#7068ea" stroke-width="1" fill="none" stroke-linejoin="round"/><path d="M6.3 3.0 L7.7 4.4" stroke="#7068ea" stroke-width="0.9"/></svg>
<div class="t" style="left:960.21px;top:401px;font-size:8.2px;line-height:8.2px;color:#7068ea;-webkit-text-stroke:0.12px currentColor;">Sửa</div>
<svg class="b" style="left:981px;top:401.21px" width="8" height="5" viewBox="0 0 8 5"><path d="M1.5 1 L4 3.5 L6.5 1" stroke="#7068ea" stroke-width="0.9" fill="none"/></svg>
<div class="b" style="left:937.6px;top:147.0px;width:56.2px;height:19.3px;background:#fff;border-radius:5px;box-shadow:0 1px 5px rgba(20,30,60,0.10)"></div>
<svg class="b" style="left:944.5px;top:151.7px" width="11" height="10" viewBox="0 0 11 10"><path d="M2.5 2.5 H8.5 M4 2.5 V1.4 H7 V2.5 M3.1 2.5 L3.5 9 H7.5 L7.9 2.5" stroke="#5f6571" stroke-width="1" fill="none" stroke-linejoin="round"/><path d="M4.8 4.5 V7.3 M6.2 4.5 V7.3" stroke="#5f6571" stroke-width="0.8"/></svg>
<div class="t" style="left:959.52px;top:154px;font-size:8.0px;line-height:8.0px;color:#30343c;-webkit-text-stroke:0.12px currentColor;">Xóa</div>
<div class="b" style="left:161.25px;top:420px;width:158.5px;height:3.75px;background:#a5aab5;border-radius:2px"></div>
<div class="t" style="left:161.82px;top:435px;font-size:8.0px;line-height:8.0px;color:#5f646e;-webkit-text-stroke:0.1px currentColor;">Tổng số:</div>
<div class="t" style="left:196.97px;top:434px;font-size:8.9px;line-height:8.9px;color:#23272f;font-weight:bold;">10</div>
<div class="t" style="left:740.59px;top:434px;font-size:8.58px;line-height:8.58px;color:#5d636e;">Số bản ghi trên trang</div>
<div class="b" style="left:831px;top:428.2px;width:36.6px;height:19.2px;background:#fff;border-radius:5px;box-shadow:inset 0 0 0 0.8px #dfe2e7"></div>
<div class="t" style="left:837.53px;top:434px;font-size:9.5px;line-height:9.5px;color:#2b2f38;">20</div>
<svg class="b" style="left:854px;top:435.5px" width="8" height="5" viewBox="0 0 8 5"><path d="M1.5 1 L4 3.5 L6.5 1" stroke="#8a909c" stroke-width="0.9" fill="none"/></svg>
<div class="t" style="left:878.45px;top:435px;font-size:9.1px;line-height:9.1px;color:#2b2f38;font-weight:bold;">1 - 10</div>
<svg class="b" style="left:916px;top:433px" width="10" height="10" viewBox="0 0 10 10"><path d="M2.5 1.8 V8.2 M7.8 1.8 L4.6 5 L7.8 8.2" stroke="#9ba1ab" stroke-width="0.9" fill="none"/></svg>
<svg class="b" style="left:936px;top:433px" width="10" height="10" viewBox="0 0 10 10"><path d="M5.9 1.8 L2.9 5 L5.9 8.2" stroke="#9ba1ab" stroke-width="0.9" fill="none"/></svg>
<svg class="b" style="left:955px;top:433px" width="10" height="10" viewBox="0 0 10 10"><path d="M4.1 1.8 L7.1 5 L4.1 8.2" stroke="#9ba1ab" stroke-width="0.9" fill="none"/></svg>
<svg class="b" style="left:974px;top:433px" width="10" height="10" viewBox="0 0 10 10"><path d="M2.2 1.8 L5.4 5 L2.2 8.2 M7.5 1.8 V8.2" stroke="#9ba1ab" stroke-width="0.9" fill="none"/></svg>
</body></html>
